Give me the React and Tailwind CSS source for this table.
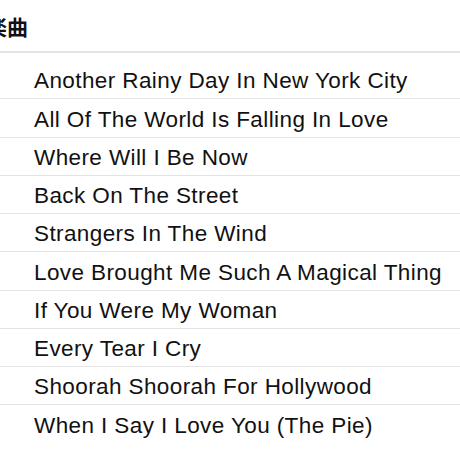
const songs = [
  "Another Rainy Day In New York City",
  "All Of The World Is Falling In Love",
  "Where Will I Be Now",
  "Back On The Street",
  "Strangers In The Wind",
  "Love Brought Me Such A Magical Thing",
  "If You Were My Woman",
  "Every Tear I Cry",
  "Shoorah Shoorah For Hollywood",
  "When I Say I Love You (The Pie)",
];

export default function App() {
  return (
    <div className="w-[460px] h-[460px] overflow-hidden bg-white text-[#111] font-['Liberation_Sans','Noto_Sans_CJK_JP',sans-serif]">
      <div className="h-[51px] flex items-center -ml-[14px] pt-[4px] text-[21px] font-bold leading-none">
        楽曲
      </div>
      <div className="border-t-2 border-[#e4e4e4]" />
      <div className="pt-[8px]">
        {songs.map((song, i) => (
          <div
            key={song}
            className={
              "h-[38.25px] flex items-center pl-[34px] pt-[3px] text-[22.5px] tracking-[0.4px] whitespace-nowrap " +
              (i < songs.length - 1 ? "border-b border-[#e4e4e4]" : "")
            }
          >
            {song}
          </div>
        ))}
      </div>
    </div>
  );
}
